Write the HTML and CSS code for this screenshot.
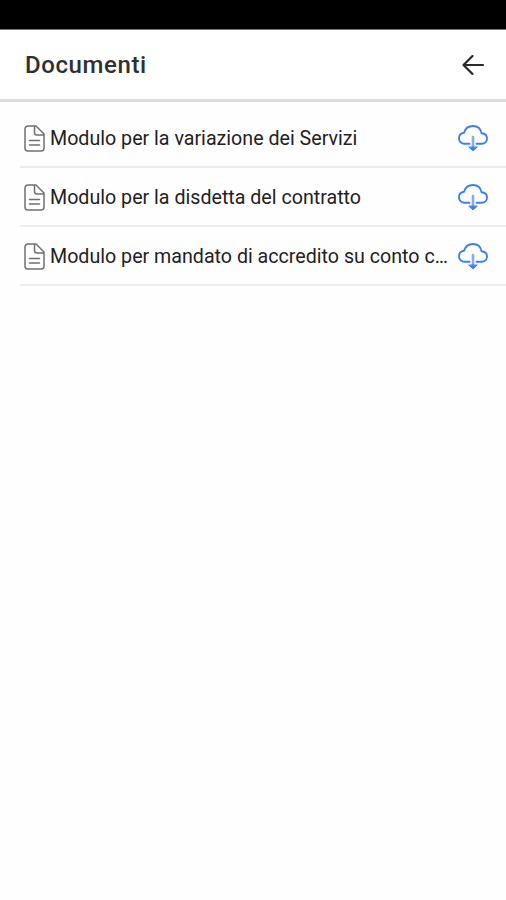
FILE: index.html
```html
<!DOCTYPE html>
<html lang="it">
<head>
<meta charset="utf-8">
<title>Documenti</title>
<link rel="stylesheet" href="styles.css">
</head>
<body>
<svg width="0" height="0" class="defs">
  <symbol id="doc" viewBox="0 0 21 27">
    <path d="M4 1h8l8 8v14a3 3 0 0 1-3 3H4a3 3 0 0 1-3-3V4a3 3 0 0 1 3-3zM10.500 1v6.500a2.500 2.500 0 0 0 2.500 2.500h7M5.500 15.500h10M5.500 20h10"/>
  </symbol>
  <symbol id="cloud" viewBox="0 0 30 27">
    <path d="M11.500 18.800H6.500C3.300 18.800 1 16.300 1 13.400c0-3 2-5.200 5-5.600C7.200 3.700 10.700 1 15 1c4.500 0 7.700 2.800 8.500 7.200 3.400.3 5.500 2.300 5.500 5.300s-2.200 5.300-5.300 5.300h-5.200"/>
    <path class="stem" d="M15 12v10.500"/>
    <path d="M11 22.300l4 3.500 4-3.500z" class="tip"/>
  </symbol>
</svg>
<div class="status"></div>
<header class="header">
  <h1 class="title">Documenti</h1>
  <svg class="back" viewBox="0 0 22 20"><path d="M10.500 1L1.500 10l9 9M1.500 10H21"/></svg>
</header>
<main class="list">
  <div class="row"><svg class="doc"><use href="#doc"/></svg><span class="label">Modulo per la variazione dei Servizi</span><svg class="cloud"><use href="#cloud"/></svg></div>
  <div class="row"><svg class="doc"><use href="#doc"/></svg><span class="label">Modulo per la disdetta del contratto</span><svg class="cloud"><use href="#cloud"/></svg></div>
  <div class="row"><svg class="doc"><use href="#doc"/></svg><span class="label">Modulo per mandato di accredito su conto c…</span><svg class="cloud"><use href="#cloud"/></svg></div>
</main>
</body>
</html>
```
FILE: styles.css
```css
* { box-sizing: border-box; }
body { margin: 0; background: #fefefe; color: #222; font-family: Roboto, sans-serif; }
.defs { display: block; }
.status { height: 30px; background: #000; border-bottom: 1px solid #777; }
.header {
  display: flex;
  align-items: center;
  justify-content: space-between;
  height: 72px;
  padding: 0 22px 0 25px;
  background: #fff;
  border-bottom: 3px solid #dcdcdc;
}
.title { margin: 0; color: #303030; font-size: 24px; line-height: 30px; font-weight: 500; letter-spacing: .6px; }
.back { width: 22px; height: 20px; fill: none; stroke: #2a2a2a; stroke-width: 2.200; stroke-linecap: round; stroke-linejoin: round; }
.list { padding: 7px 0 0 20px; }
.row {
  display: flex;
  align-items: center;
  height: 59px;
  padding: 1px 18px 0 4px;
  border-bottom: 2px solid #ececec;
}
.doc { flex: none; width: 21px; height: 27px; margin-right: 5px; fill: none; stroke: #707070; stroke-width: 1.500; stroke-linejoin: round; stroke-linecap: round; }
.label { flex: 1; padding-top: 1px; white-space: nowrap; font-size: 19.650px; line-height: 28px; }
.cloud { flex: none; width: 30px; height: 27px; fill: none; stroke: #3d7fee; stroke-width: 1.900; stroke-linejoin: round; stroke-linecap: round; }
.stem { stroke: #82adf5; stroke-width: 2.600; }
.tip { fill: #3d7fee; stroke-width: 1; }
```
